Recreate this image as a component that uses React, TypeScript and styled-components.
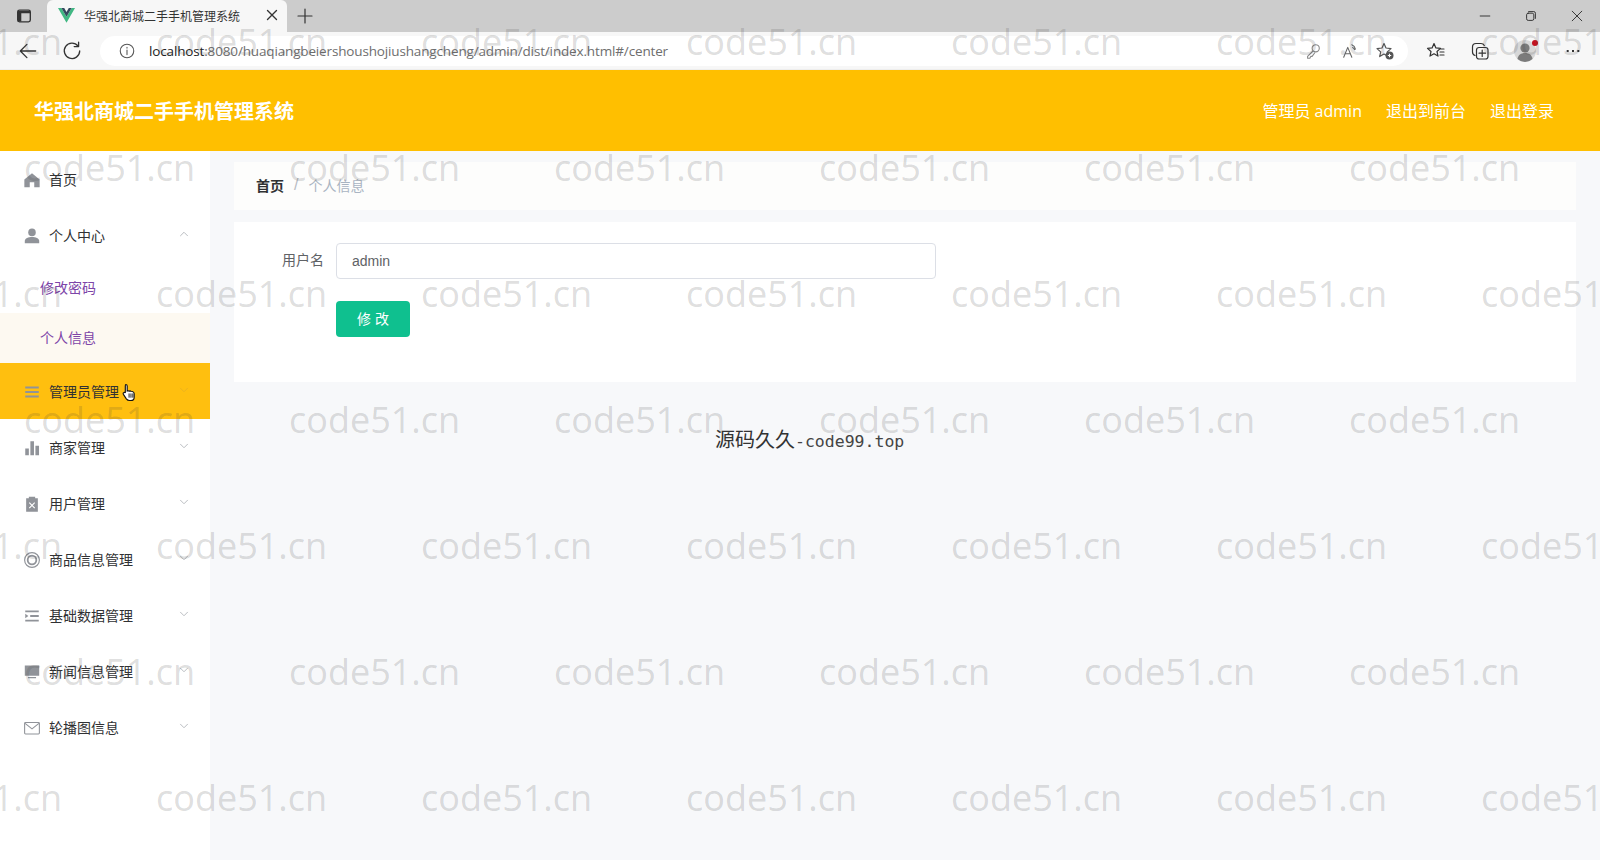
import styled, {createGlobalStyle} from 'styled-components'
import {ChevronDown, ChevronUp} from 'lucide-react'
import type {ReactNode} from 'react'

const GlobalStyle = createGlobalStyle`
  html, body {
    margin: 0;
    padding: 0;
    height: 100%;
    overflow: hidden;
  }
  body {
    font-family: 'Liberation Sans', 'Noto Sans CJK SC', sans-serif;
  }
  * {
    box-sizing: border-box;
  }
`

const Page = styled.div`
  position: relative;
  display: flex;
  flex-direction: column;
  width: 1600px;
  height: 860px;
  overflow: hidden;
  background: #f7f8fa;
`

/* browser chrome */
const TabStrip = styled.div`
  display: flex;
  align-items: flex-end;
  height: 32px;
  background: #cccccc;
`

const WindowIcon = styled.div`
  display: flex;
  align-items: center;
  justify-content: center;
  width: 47px;
  height: 32px;
`

const Tab = styled.div`
  display: flex;
  align-items: center;
  width: 240px;
  height: 32px;
  padding: 0 6px 2px 11px;
  background: #f7f7f7;
  border-radius: 6px 6px 0 0;
  font-size: 12px;
  color: #333;
`

const TabTitle = styled.span`
  margin-left: 9px;
  flex: 1;
  white-space: nowrap;
`

const NewTab = styled.div`
  display: flex;
  align-items: center;
  justify-content: center;
  width: 36px;
  height: 32px;
`

const WindowControls = styled.div`
  display: flex;
  align-items: center;
  gap: 30px;
  height: 32px;
  margin-left: auto;
  padding-right: 15px;
`

const Toolbar = styled.div`
  display: flex;
  align-items: center;
  height: 38px;
  padding-left: 17px;
  background: #f7f7f7;
  border-bottom: 1px solid #eee;
`

const NavButton = styled.div`
  display: flex;
  align-items: center;
  justify-content: center;
  width: 22px;
  margin-right: 22px;
`

const AddressBar = styled.div`
  display: flex;
  align-items: center;
  width: 1308px;
  height: 30px;
  margin-left: -5px;
  padding: 0 13px 0 18px;
  background: #fff;
  border-radius: 15px;
`

const Url = styled.div`
  margin-left: 13px;
  flex: 1;
  font-family: 'Open Sans', sans-serif;
  font-size: 13.5px;
  letter-spacing: -0.15px;
  color: #6e6e6e;
  white-space: nowrap;

  b {
    font-weight: 400;
    color: #222;
  }
`

const AddressIcons = styled.div`
  display: flex;
  align-items: center;
  gap: 19px;

  > :last-child {
    margin-left: -3px;
  }
`

const ToolIcons = styled.div`
  display: flex;
  align-items: center;
  gap: 24px;
  margin-left: 18px;
`

/* app header */
const Header = styled.header`
  display: flex;
  align-items: center;
  justify-content: space-between;
  height: 81px;
  padding: 0 46px 0 34px;
  background: #ffbf00;
  color: #fff;
`

const Brand = styled.div`
  font-size: 20px;
  font-weight: 700;
`

const HeaderLinks = styled.div`
  display: flex;
  gap: 24px;
  padding-bottom: 2px;
  font-family: 'Open Sans', 'Noto Sans CJK SC', sans-serif;
  font-size: 16px;
`

const Body = styled.div`
  display: flex;
  flex: 1;
  min-height: 0;
`

/* sidebar */
const Sidebar = styled.aside`
  flex: none;
  width: 210px;
  background: #fff;
`

const MenuRow = styled.div<{$active?: boolean}>`
  display: flex;
  align-items: center;
  height: 56px;
  padding: 0 19px 0 23px;
  background: ${({$active}) => ($active ? '#ffbf0f' : 'transparent')};
  font-size: 14px;
  color: #303133;

  > svg {
    margin-bottom: 3px;
  }
`

const MenuIcon = styled.span`
  display: flex;
  align-items: center;
  justify-content: center;
  width: 18px;
  margin: 2px 8px 0 0;
  color: #909399;
`

const MenuLabel = styled.span`
  flex: 1;
  white-space: nowrap;
`

const Pointer = styled.span`
  position: absolute;
  left: 122px;
  top: 20px;
  display: flex;
`

const SubRow = styled.div<{$active?: boolean}>`
  display: flex;
  align-items: center;
  height: 50px;
  padding: 0 0 2px 40px;
  background: ${({$active}) => ($active ? '#fdf9f1' : 'transparent')};
  font-size: 14px;
  color: #7d45a8;
`

const ActiveWrap = styled.div`
  position: relative;
`

/* main */
const Main = styled.main`
  flex: 1;
  padding: 11px 24px 0;
`

const Crumbs = styled.div`
  display: flex;
  align-items: center;
  height: 48px;
  padding: 0 0 3px 22px;
  background: #fdfdfc;
  font-size: 14px;
  color: #a9b4c2;
`

const CrumbHome = styled.span`
  font-weight: 700;
  color: #303133;
`

const CrumbSep = styled.span`
  margin: 0 10px 0 10px;
  font-size: 16px;
  color: #b8bcc4;
`

const FormCard = styled.section`
  height: 160px;
  margin-top: 12px;
  padding: 21px 0 0;
  background: #fff;
`

const FieldRow = styled.div`
  display: flex;
  align-items: center;
`

const FieldLabel = styled.label`
  width: 102px;
  padding: 0 12px 4px 0;
  text-align: right;
  font-size: 14px;
  color: #606266;
`

const TextInput = styled.div`
  display: flex;
  align-items: center;
  width: 600px;
  height: 36px;
  padding-left: 15px;
  border: 1px solid #dcdfe6;
  border-radius: 4px;
  font-size: 14px;
  color: #606266;
`

const SubmitButton = styled.button`
  display: block;
  width: 74px;
  height: 36px;
  margin: 22px 0 0 102px;
  padding: 0 0 2px;
  border: 0;
  border-radius: 4px;
  background: #0fc08f;
  color: #fff;
  font-family: inherit;
  font-size: 14px;
  white-space: pre;
`

const Notice = styled.div`
  display: flex;
  align-items: baseline;
  margin: 42px 0 0 481px;
  color: #333;
`

const NoticeCjk = styled.span`
  font-family: 'Noto Sans CJK SC', sans-serif;
  font-size: 20px;
  font-weight: 400;
`

const NoticeLatin = styled.span`
  font-family: 'DejaVu Sans Mono', monospace;
  font-size: 16.5px;
  color: #444;
`

/* repeated watermark over the whole capture */
const WatermarkLayer = styled.div`
  position: absolute;
  inset: 0;
  padding-top: 20px;
  overflow: hidden;
  pointer-events: none;
`

const WatermarkRow = styled.div<{$offset: number}>`
  display: flex;
  height: 126px;
  margin-left: ${({$offset}) => $offset}px;
`

const WatermarkText = styled.span`
  flex: none;
  width: 265px;
  font-family: 'Open Sans', sans-serif;
  font-size: 36px;
  line-height: 44px;
  color: rgba(60, 60, 60, 0.18);
  white-space: nowrap;
`

const line = {fill: 'none', stroke: 'currentColor', strokeWidth: 1.2, strokeLinecap: 'round', strokeLinejoin: 'round'} as const

const Glyph = ({children, size = 18, color = '#333'}: {children: ReactNode; size?: number; color?: string}) => (
  <svg width={size} height={size} viewBox="0 0 20 20" style={{color}}>
    {children}
  </svg>
)

const icons: Record<string, ReactNode> = {
  home: <path fill="currentColor" d="M10 2.500 1.500 9.500v8.500h6v-5.500h5V18h6V9.500Z" />,
  user: (
    <>
      <circle cx="10" cy="6" r="4.200" fill="currentColor" />
      <path fill="currentColor" d="M2 18v-2.500C2 12.500 6 11 10 11s8 1.500 8 4.500V18Z" />
    </>
  ),
  menu: <path fill="currentColor" d="M2.500 4h15v2.200h-15ZM2.500 9h15v2.200h-15ZM2.500 14h15v2.200h-15Z" />,
  chart: <path fill="currentColor" d="M2.500 10.500h4V18h-4ZM8.200 2.500h4V18h-4ZM13.800 7.500h4V18h-4Z" />,
  clipboard: (
    <>
      <path fill="currentColor" d="M3.500 3.500h3V2h7v1.500h3V18.500h-13Z" />
      <path d="m7 8.500 6 6m0-6-6 6" fill="none" stroke="#fff" strokeWidth="1.300" />
    </>
  ),
  ring: (
    <>
      <circle cx="10" cy="10" r="8.200" fill="none" stroke="currentColor" strokeWidth="1.300" />
      <circle cx="10" cy="10" r="4.800" fill="none" stroke="currentColor" strokeWidth="2" />
    </>
  ),
  list: <path fill="currentColor" d="M2.500 3.800h15v2h-15ZM8 9h9.500v2H8ZM2.500 14.200h15v2h-15ZM2.500 7.500l3.500 2.500-3.500 2.500Z" />,
  monitor: <path fill="currentColor" d="M2 2.800h16v11.400H2ZM5.500 15.500h9V17h-9Z" />,
  mail: (
    <>
      <rect x="1.800" y="3.800" width="16.400" height="12.800" rx="1" fill="none" stroke="currentColor" strokeWidth="1.200" />
      <path d="m2.300 4.800 7.700 6.200 7.700-6.200" fill="none" stroke="currentColor" strokeWidth="1.200" />
    </>
  ),
}

const topMenus = [
  {icon: 'chart', label: '商家管理'},
  {icon: 'clipboard', label: '用户管理'},
  {icon: 'ring', label: '商品信息管理'},
  {icon: 'list', label: '基础数据管理'},
  {icon: 'monitor', label: '新闻信息管理'},
  {icon: 'mail', label: '轮播图信息'},
]

const MenuIconBox = ({name}: {name: string}) => (
  <MenuIcon>
    <svg width="18" height="18" viewBox="0 0 20 20">
      {icons[name]}
    </svg>
  </MenuIcon>
)

const watermarkRows = [
  -109, 24, -109, 24, -109, 24, -109,
]

const App = () => {
  return (
    <Page>
      <GlobalStyle />
      <TabStrip>
        <WindowIcon>
          <Glyph size={18}>
            <rect x="3" y="3.500" width="14" height="13" rx="2" {...line} strokeWidth={1.500} />
            <path fill="currentColor" d="M3 4.500h14V7H3ZM3 6h4v10H3Z" />
          </Glyph>
        </WindowIcon>
        <Tab>
          <svg width="17" height="15" viewBox="0 0 17 15">
            <path fill="#41b883" d="M0 0h3.400l5.100 8.800L13.600 0H17L8.500 14.700Z" />
            <path fill="#35495e" d="M3.400 0h2.800l2.300 4 2.300-4h2.800L8.500 8.800Z" />
          </svg>
          <TabTitle>华强北商城二手手机管理系统</TabTitle>
          <Glyph size={18}>
            <path d="m5 5 10 10M15 5 5 15" {...line} strokeWidth={1.500} />
          </Glyph>
        </Tab>
        <NewTab>
          <Glyph size={20}>
            <path d="M10 3v14M3 10h14" {...line} />
          </Glyph>
        </NewTab>
        <WindowControls>
          <Glyph size={16}>
            <path d="M4 10h12" {...line} />
          </Glyph>
          <Glyph size={16}>
            <rect x="4.500" y="6.500" width="9" height="9" rx="2" {...line} />
            <path d="M7 4.500h6.500a2 2 0 0 1 2 2V13" {...line} />
          </Glyph>
          <Glyph size={16}>
            <path d="m4 4 12 12M16 4 4 16" {...line} />
          </Glyph>
        </WindowControls>
      </TabStrip>
      <Toolbar>
        <NavButton>
          <Glyph size={22}>
            <path d="M17 10H3M9 4l-6 6 6 6" {...line} />
          </Glyph>
        </NavButton>
        <NavButton>
          <Glyph size={22}>
            <path d="M15.500 5.500A7 7 0 1 0 17 10M16 2v4h-4" {...line} />
          </Glyph>
        </NavButton>
        <AddressBar>
          <Glyph size={18} color="#555">
            <circle cx="10" cy="10" r="7.500" {...line} />
            <path d="M10 9v5M10 6v.8" {...line} />
          </Glyph>
          <Url>
            <b>localhost</b>:8080/huaqiangbeiershoushojiushangcheng/admin/dist/index.html#/center
          </Url>
          <AddressIcons>
            <Glyph size={18} color="#888">
              <circle cx="13" cy="7" r="4" {...line} />
              <path d="M10 10 4 16v2h2.500l1-2h1.500l3-4" {...line} />
            </Glyph>
            <Glyph size={18} color="#666">
              <path d="m3 17 4.500-11L12 17M4.800 13h5.400M12 3c2 .8 3.500 2.500 4 5M13 6c1 .5 1.500 1.200 2 2.500" {...line} />
            </Glyph>
            <Glyph size={20} color="#555">
              <path d="m9 2.500 2 4.500 5 .6-3.700 3.300 1 4.700L9 13l-4.300 2.600 1-4.700L2 7.600 7 7Z" {...line} />
              <circle cx="14.500" cy="14.500" r="4" fill="#555" />
              <path d="M12.800 14.500h3.400M14.500 12.800v3.400" stroke="#fff" strokeWidth="1.100" />
            </Glyph>
          </AddressIcons>
        </AddressBar>
        <ToolIcons>
          <Glyph size={20}>
            <path d="m8 2.500 1.900 4.400 4.600.5-3.500 3.100 1 4.600L8 12.700l-4 2.400 1-4.600-3.500-3.100 4.600-.5ZM14 8h4M14 11h4M14 14h4" {...line} />
          </Glyph>
          <Glyph size={20}>
            <rect x="6.500" y="6.500" width="11.500" height="11.500" rx="2.500" {...line} />
            <path d="M12.200 9v6.500M9 12.200h6.500M5 14.500c-1.500-.5-2.500-2-2.500-3.500V6a3.500 3.500 0 0 1 3.500-3.500h5c1.500 0 2.700.8 3.300 2" {...line} />
          </Glyph>
          <svg width="26" height="26" viewBox="0 0 26 26">
            <circle cx="11" cy="13" r="11" fill="#d7d7d7" />
            <circle cx="11" cy="10" r="4.600" fill="#7b7b7b" />
            <path fill="#7b7b7b" d="M3.500 21c.5-4 3.500-6 7.500-6s7 2 7.500 6a11 11 0 0 1-15 0Z" />
            <circle cx="21" cy="5" r="3" fill="#c1121f" />
          </svg>
          <Glyph size={18}>
            <path fill="currentColor" d="M3 9h2.200v2.200H3ZM8.900 9h2.200v2.200H8.900ZM14.800 9H17v2.200h-2.200Z" />
          </Glyph>
        </ToolIcons>
      </Toolbar>
      <Header>
        <Brand>华强北商城二手手机管理系统</Brand>
        <HeaderLinks>
          <span>管理员 admin</span>
          <span>退出到前台</span>
          <span>退出登录</span>
        </HeaderLinks>
      </Header>
      <Body>
        <Sidebar>
          <MenuRow>
            <MenuIconBox name="home" />
            <MenuLabel>首页</MenuLabel>
          </MenuRow>
          <MenuRow>
            <MenuIconBox name="user" />
            <MenuLabel>个人中心</MenuLabel>
            <ChevronUp size={14} color="#b0b3b8" strokeWidth={1.5} />
          </MenuRow>
          <SubRow>修改密码</SubRow>
          <SubRow $active>个人信息</SubRow>
          <ActiveWrap>
            <MenuRow $active>
              <MenuIconBox name="menu" />
              <MenuLabel>管理员管理</MenuLabel>
              <ChevronDown size={14} color="#e8b020" strokeWidth={1.5} />
            </MenuRow>
            <Pointer>
              <svg width="17" height="19" viewBox="0 0 18 20">
                <path
                  fill="#fff"
                  stroke="#111"
                  strokeWidth="1.200"
                  d="M4 1.500c1 0 1.500.6 1.500 1.500v5.500l1-.3 1 .3 1-.2 1.200.4 1.200.2c1.300.3 2 1 2 2.300V15c0 2-1.500 3.500-3.500 3.500H8c-1.500 0-2.500-.6-3.400-1.800L1.500 12c-.6-1-.2-1.800.6-2 .7-.2 1.200.2 1.400.6V3c0-.9 0-1.500.5-1.500Z"
                />
                <path d="M7.500 11v4.500M9.500 11v4.500M11.500 11v4.500" stroke="#111" strokeWidth="1" />
              </svg>
            </Pointer>
          </ActiveWrap>
          {topMenus.map(menu => (
            <MenuRow key={menu.label}>
              <MenuIconBox name={menu.icon} />
              <MenuLabel>{menu.label}</MenuLabel>
              <ChevronDown size={14} color="#b0b3b8" strokeWidth={1.5} />
            </MenuRow>
          ))}
        </Sidebar>
        <Main>
          <Crumbs>
            <CrumbHome>首页</CrumbHome>
            <CrumbSep>/</CrumbSep>
            个人信息
          </Crumbs>
          <FormCard>
            <FieldRow>
              <FieldLabel>用户名</FieldLabel>
              <TextInput>admin</TextInput>
            </FieldRow>
            <SubmitButton>修 改</SubmitButton>
          </FormCard>
          <Notice>
            <NoticeCjk>源码久久</NoticeCjk>
            <NoticeLatin>-code99.top</NoticeLatin>
          </Notice>
        </Main>
      </Body>
      <WatermarkLayer>
        {watermarkRows.map((offset, row) => (
          <WatermarkRow key={row} $offset={offset}>
            {Array.from({length: 7}, (_, col) => (
              <WatermarkText key={col}>code51.cn</WatermarkText>
            ))}
          </WatermarkRow>
        ))}
      </WatermarkLayer>
    </Page>
  )
}

export default App
